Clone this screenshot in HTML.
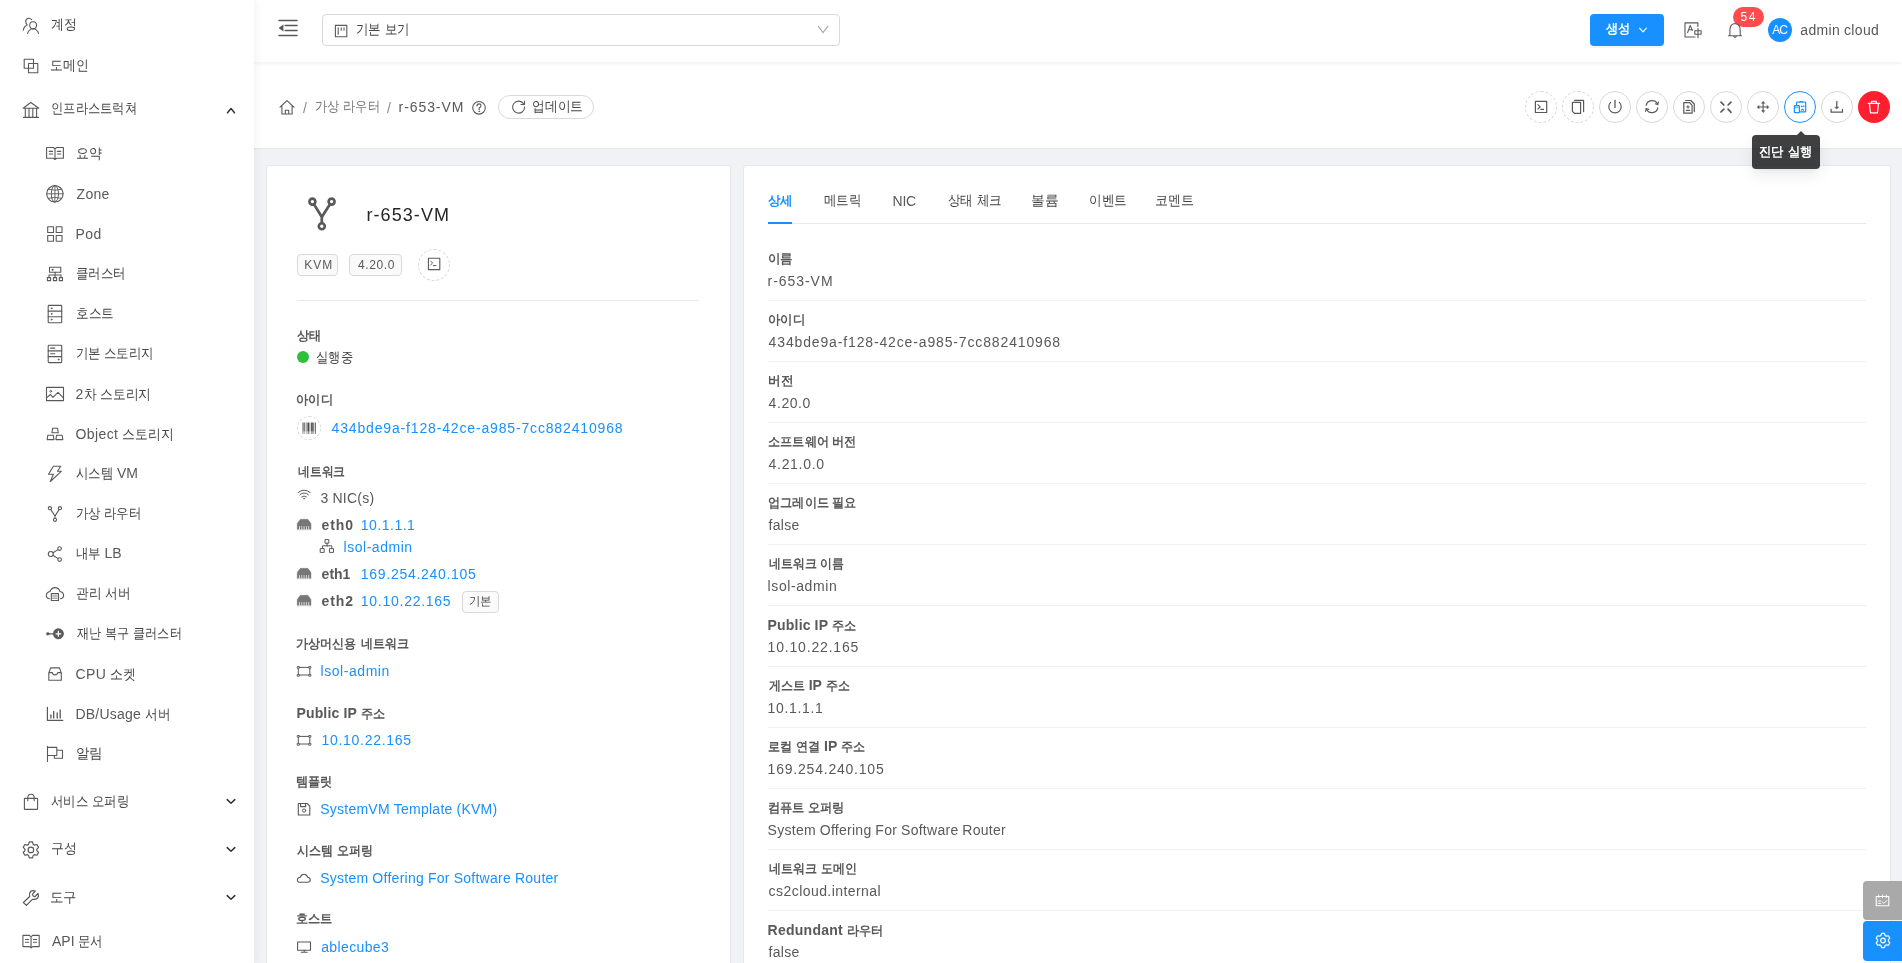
<!DOCTYPE html>
<html><head><meta charset="utf-8"><title>r-653-VM</title>
<style>
html,body{margin:0;padding:0;width:1902px;height:963px;overflow:hidden;background:#f0f2f5}
body{position:relative;font-family:"Liberation Sans",sans-serif}
.t{position:absolute;line-height:20px;white-space:nowrap}
svg{overflow:visible}
</style></head><body>
<div style="position:absolute;left:254px;top:62px;width:1648px;height:86px;background:#fff;border-bottom:1px solid #e8e8e8;"></div>
<div style="position:absolute;left:254px;top:0px;width:1648px;height:62px;background:#fff;box-shadow:0 1px 4px rgba(0,21,41,.08);"></div>
<div style="position:absolute;left:0px;top:0px;width:254px;height:963px;background:#fff;box-shadow:2px 0 8px 0 rgba(29,35,41,.06);"></div>
<div style="position:absolute;left:266px;top:165px;width:465px;height:820px;background:#fff;border:1px solid #e8e8e8;border-radius:3px;box-sizing:border-box;"></div>
<div style="position:absolute;left:743px;top:165px;width:1148px;height:820px;background:#fff;border:1px solid #e8e8e8;border-radius:3px;box-sizing:border-box;"></div>
<div style="position:absolute;left:322px;top:14px;width:518px;height:32px;border:1px solid #d9d9d9;border-radius:4px;box-sizing:border-box;background:#fff;"></div>
<div style="position:absolute;left:1590px;top:14px;width:74px;height:32px;background:#1890ff;border-radius:4px;box-shadow:0 2px 0 rgba(0,0,0,.045);"></div>
<div style="position:absolute;left:1733px;top:7px;width:31px;height:20px;background:#ff4d4f;border-radius:10px;box-shadow:0 0 0 1px #fff;"></div>
<div style="position:absolute;left:1768px;top:18px;width:24px;height:24px;background:#1890ff;border-radius:50%;"></div>
<div style="position:absolute;left:498px;top:95px;width:96px;height:24px;border:1px solid #d9d9d9;border-radius:12px;box-sizing:border-box;background:#fff;"></div>
<div style="position:absolute;left:1525px;top:91px;width:32px;height:32px;border:1px dashed #d9d9d9;background:#fff;border-radius:50%;box-sizing:border-box;"></div>
<div style="position:absolute;left:1562px;top:91px;width:32px;height:32px;border:1px dashed #d9d9d9;background:#fff;border-radius:50%;box-sizing:border-box;"></div>
<div style="position:absolute;left:1599px;top:91px;width:32px;height:32px;border:1px solid #d9d9d9;background:#fff;border-radius:50%;box-sizing:border-box;"></div>
<div style="position:absolute;left:1636px;top:91px;width:32px;height:32px;border:1px solid #d9d9d9;background:#fff;border-radius:50%;box-sizing:border-box;"></div>
<div style="position:absolute;left:1673px;top:91px;width:32px;height:32px;border:1px solid #d9d9d9;background:#fff;border-radius:50%;box-sizing:border-box;"></div>
<div style="position:absolute;left:1710px;top:91px;width:32px;height:32px;border:1px solid #d9d9d9;background:#fff;border-radius:50%;box-sizing:border-box;"></div>
<div style="position:absolute;left:1747px;top:91px;width:32px;height:32px;border:1px solid #d9d9d9;background:#fff;border-radius:50%;box-sizing:border-box;"></div>
<div style="position:absolute;left:1784px;top:91px;width:32px;height:32px;border:1px solid #1890ff;background:#fff;border-radius:50%;box-sizing:border-box;"></div>
<div style="position:absolute;left:1821px;top:91px;width:32px;height:32px;border:1px solid #d9d9d9;background:#fff;border-radius:50%;box-sizing:border-box;"></div>
<div style="position:absolute;left:1858px;top:91px;width:32px;height:32px;background:#ff1f30;border-radius:50%;box-sizing:border-box;"></div>
<div style="position:absolute;left:1752px;top:135px;width:68px;height:34px;background:rgba(0,0,0,.75);border-radius:4px;box-shadow:0 3px 6px -4px rgba(0,0,0,.12),0 6px 16px 0 rgba(0,0,0,.08);"></div>
<div style="position:absolute;left:1796.5px;top:131px;width:0;height:0;border-left:4px solid transparent;border-right:4px solid transparent;border-bottom:4px solid rgba(0,0,0,.75)"></div>
<div style="position:absolute;left:297px;top:254px;width:41px;height:22px;border:1px solid #d9d9d9;border-radius:4px;background:#fafafa;box-sizing:border-box;"></div>
<div style="position:absolute;left:349px;top:254px;width:53px;height:22px;border:1px solid #d9d9d9;border-radius:4px;background:#fafafa;box-sizing:border-box;"></div>
<div style="position:absolute;left:418px;top:249px;width:32px;height:32px;border:1px dashed #d9d9d9;border-radius:50%;box-sizing:border-box;"></div>
<div style="position:absolute;left:297px;top:300px;width:402px;height:1px;background:#e8e8e8;"></div>
<div style="position:absolute;left:297px;top:351px;width:12px;height:12px;background:#2fbf3b;border-radius:50%;"></div>
<div style="position:absolute;left:297px;top:416px;width:24px;height:24px;border:1px dashed #d9d9d9;border-radius:50%;box-sizing:border-box;"></div>
<div style="position:absolute;left:462px;top:591px;width:37px;height:22px;border:1px solid #d9d9d9;border-radius:4px;background:#fafafa;box-sizing:border-box;"></div>
<div style="position:absolute;left:768px;top:223px;width:1098px;height:1px;background:#e8e8e8;"></div>
<div style="position:absolute;left:768px;top:222px;width:24px;height:2px;background:#1890ff;"></div>
<div style="position:absolute;left:768px;top:300px;width:1098px;height:1px;background:#f0f0f0;"></div>
<div style="position:absolute;left:768px;top:361px;width:1098px;height:1px;background:#f0f0f0;"></div>
<div style="position:absolute;left:768px;top:422px;width:1098px;height:1px;background:#f0f0f0;"></div>
<div style="position:absolute;left:768px;top:483px;width:1098px;height:1px;background:#f0f0f0;"></div>
<div style="position:absolute;left:768px;top:544px;width:1098px;height:1px;background:#f0f0f0;"></div>
<div style="position:absolute;left:768px;top:605px;width:1098px;height:1px;background:#f0f0f0;"></div>
<div style="position:absolute;left:768px;top:666px;width:1098px;height:1px;background:#f0f0f0;"></div>
<div style="position:absolute;left:768px;top:727px;width:1098px;height:1px;background:#f0f0f0;"></div>
<div style="position:absolute;left:768px;top:788px;width:1098px;height:1px;background:#f0f0f0;"></div>
<div style="position:absolute;left:768px;top:849px;width:1098px;height:1px;background:#f0f0f0;"></div>
<div style="position:absolute;left:768px;top:910px;width:1098px;height:1px;background:#f0f0f0;"></div>
<div style="position:absolute;left:1863px;top:881px;width:39px;height:39px;background:#a9a9a9;border-radius:4px 0 0 4px;"></div>
<div style="position:absolute;left:1863px;top:921px;width:39px;height:40px;background:#1890ff;border-radius:4px 0 0 4px;"></div>
<div style="position:absolute;left:0;top:0;width:1902px;height:963px;will-change:transform">
<div class="t" style="left:51.00px;top:14px;font-size:14px;color:#595959;"><span style="display:inline-block;font-size:13.5px;transform:scaleX(0.9259);transform-origin:0 0;margin-right:-2.000px;color:#454545;">계정</span></div>
<div class="t" style="left:50.00px;top:55px;font-size:14px;color:#595959;"><span style="display:inline-block;font-size:13.5px;transform:scaleX(0.9136);transform-origin:0 0;margin-right:-3.500px;color:#454545;">도메인</span></div>
<div class="t" style="left:51.00px;top:98px;font-size:14px;color:#595959;"><span style="display:inline-block;font-size:13.5px;transform:scaleX(0.8783);transform-origin:0 0;margin-right:-11.500px;color:#454545;">인프라스트럭쳐</span></div>
<div class="t" style="left:75.50px;top:143px;font-size:14px;color:#595959;"><span style="display:inline-block;font-size:13.5px;transform:scaleX(0.9259);transform-origin:0 0;margin-right:-2.000px;color:#454545;">요약</span></div>
<div class="t" style="left:76.50px;top:184px;font-size:14px;color:#595959;"><span style="letter-spacing:0.333px">Zone</span></div>
<div class="t" style="left:75.50px;top:224px;font-size:14px;color:#595959;"><span style="letter-spacing:0.500px">Pod</span></div>
<div class="t" style="left:75.50px;top:263px;font-size:14px;color:#595959;"><span style="display:inline-block;font-size:13.5px;transform:scaleX(0.8889);transform-origin:0 0;margin-right:-6.000px;color:#454545;">클러스터</span></div>
<div class="t" style="left:75.50px;top:303px;font-size:14px;color:#595959;"><span style="display:inline-block;font-size:13.5px;transform:scaleX(0.9012);transform-origin:0 0;margin-right:-4.000px;color:#454545;">호스트</span></div>
<div class="t" style="left:75.50px;top:343px;font-size:14px;color:#595959;"><span style="display:inline-block;font-size:13.5px;transform:scaleX(0.8889);transform-origin:0 0;margin-right:-3.000px;color:#454545;">기본</span> <span style="display:inline-block;font-size:13.5px;transform:scaleX(0.8889);transform-origin:0 0;margin-right:-6.000px;color:#454545;">스토리지</span></div>
<div class="t" style="left:75.50px;top:384px;font-size:14px;color:#595959;"><span style="letter-spacing:0.333px">2</span><span style="display:inline-block;font-size:13.5px;transform:scaleX(0.9136);transform-origin:0 0;margin-right:-1.167px;color:#454545;">차</span> <span style="display:inline-block;font-size:13.5px;transform:scaleX(0.9136);transform-origin:0 0;margin-right:-4.667px;color:#454545;">스토리지</span></div>
<div class="t" style="left:75.50px;top:424px;font-size:14px;color:#595959;"><span style="letter-spacing:0.400px">Object</span> <span style="display:inline-block;font-size:13.5px;transform:scaleX(0.9185);transform-origin:0 0;margin-right:-4.400px;color:#454545;">스토리지</span></div>
<div class="t" style="left:75.50px;top:463px;font-size:14px;color:#595959;"><span style="display:inline-block;font-size:13.5px;transform:scaleX(0.8889);transform-origin:0 0;margin-right:-4.500px;color:#454545;">시스템</span> VM</div>
<div class="t" style="left:75.50px;top:503px;font-size:14px;color:#595959;"><span style="display:inline-block;font-size:13.5px;transform:scaleX(0.8889);transform-origin:0 0;margin-right:-3.000px;color:#454545;">가상</span> <span style="display:inline-block;font-size:13.5px;transform:scaleX(0.8889);transform-origin:0 0;margin-right:-4.500px;color:#454545;">라우터</span></div>
<div class="t" style="left:75.50px;top:543px;font-size:14px;color:#595959;"><span style="display:inline-block;font-size:13.5px;transform:scaleX(0.8889);transform-origin:0 0;margin-right:-3.000px;color:#454545;">내부</span> LB</div>
<div class="t" style="left:75.50px;top:583px;font-size:14px;color:#595959;"><span style="display:inline-block;font-size:13.5px;transform:scaleX(0.9074);transform-origin:0 0;margin-right:-2.500px;color:#454545;">관리</span> <span style="display:inline-block;font-size:13.5px;transform:scaleX(0.9074);transform-origin:0 0;margin-right:-2.500px;color:#454545;">서버</span></div>
<div class="t" style="left:76.50px;top:623px;font-size:14px;color:#595959;"><span style="display:inline-block;font-size:13.5px;transform:scaleX(0.8704);transform-origin:0 0;margin-right:-3.500px;color:#454545;">재난</span> <span style="display:inline-block;font-size:13.5px;transform:scaleX(0.8704);transform-origin:0 0;margin-right:-3.500px;color:#454545;">복구</span> <span style="display:inline-block;font-size:13.5px;transform:scaleX(0.8704);transform-origin:0 0;margin-right:-7.000px;color:#454545;">클러스터</span></div>
<div class="t" style="left:75.50px;top:664px;font-size:14px;color:#595959;"><span style="letter-spacing:0.400px">CPU</span> <span style="display:inline-block;font-size:13.5px;transform:scaleX(0.9185);transform-origin:0 0;margin-right:-2.200px;color:#454545;">소켓</span></div>
<div class="t" style="left:75.50px;top:704px;font-size:14px;color:#595959;"><span style="letter-spacing:0.200px">DB/Usage</span> <span style="display:inline-block;font-size:13.5px;transform:scaleX(0.9037);transform-origin:0 0;margin-right:-2.600px;color:#454545;">서버</span></div>
<div class="t" style="left:75.50px;top:743px;font-size:14px;color:#595959;"><span style="display:inline-block;font-size:13.5px;transform:scaleX(0.9630);transform-origin:0 0;margin-right:-1.000px;color:#454545;">알림</span></div>
<div class="t" style="left:51.00px;top:791px;font-size:14px;color:#595959;"><span style="display:inline-block;font-size:13.5px;transform:scaleX(0.8889);transform-origin:0 0;margin-right:-4.500px;color:#454545;">서비스</span> <span style="display:inline-block;font-size:13.5px;transform:scaleX(0.8889);transform-origin:0 0;margin-right:-4.500px;color:#454545;">오퍼링</span></div>
<div class="t" style="left:51.00px;top:838px;font-size:14px;color:#595959;"><span style="display:inline-block;font-size:13.5px;transform:scaleX(0.9259);transform-origin:0 0;margin-right:-2.000px;color:#454545;">구성</span></div>
<div class="t" style="left:50.00px;top:887px;font-size:14px;color:#595959;"><span style="display:inline-block;font-size:13.5px;transform:scaleX(0.9630);transform-origin:0 0;margin-right:-1.000px;color:#454545;">도구</span></div>
<div class="t" style="left:52.00px;top:931px;font-size:14px;color:#595959;">API <span style="display:inline-block;font-size:13.5px;transform:scaleX(0.8889);transform-origin:0 0;margin-right:-3.000px;color:#454545;">문서</span></div>
<div class="t" style="left:356.00px;top:19px;font-size:14px;color:#595959;"><span style="display:inline-block;font-size:13.5px;transform:scaleX(0.8889);transform-origin:0 0;margin-right:-3.000px;color:#454545;">기본</span> <span style="display:inline-block;font-size:13.5px;transform:scaleX(0.8889);transform-origin:0 0;margin-right:-3.000px;color:#454545;">보기</span></div>
<div class="t" style="left:1606.00px;top:18px;font-size:14px;color:#fff;font-weight:700;"><span style="display:inline-block;font-size:13.0px;transform:scaleX(0.9385);transform-origin:0 0;margin-right:-1.600px;">생성</span></div>
<div class="t" style="left:1740.50px;top:7px;font-size:12px;color:#fff;"><span style="letter-spacing:1.500px">54</span></div>
<div class="t" style="left:1772.30px;top:20.4px;font-size:12px;color:#fff;"><span style="letter-spacing:-1.000px">AC</span></div>
<div class="t" style="left:1800.30px;top:20.3px;font-size:14px;color:#595959;"><span style="letter-spacing:0.333px">admin</span> <span style="letter-spacing:0.333px">cloud</span></div>
<div class="t" style="left:303.00px;top:98px;font-size:14px;color:#8c8c8c;">/</div>
<div class="t" style="left:314.60px;top:96px;font-size:14px;color:#8c8c8c;"><span style="display:inline-block;font-size:13.5px;transform:scaleX(0.8800);transform-origin:0 0;margin-right:-3.240px;color:#777;">가상</span> <span style="display:inline-block;font-size:13.5px;transform:scaleX(0.8800);transform-origin:0 0;margin-right:-4.860px;color:#777;">라우터</span></div>
<div class="t" style="left:387.00px;top:98px;font-size:14px;color:#8c8c8c;">/</div>
<div class="t" style="left:398.60px;top:97px;font-size:14px;color:#595959;"><span style="letter-spacing:0.914px">r-653-VM</span></div>
<div class="t" style="left:531.80px;top:96px;font-size:14px;color:#595959;"><span style="display:inline-block;font-size:13.5px;transform:scaleX(0.9111);transform-origin:0 0;margin-right:-4.800px;color:#454545;">업데이트</span></div>
<div class="t" style="left:1759.30px;top:141px;font-size:14px;color:#fff;font-weight:700;"><span style="display:inline-block;font-size:13.0px;transform:scaleX(0.9462);transform-origin:0 0;margin-right:-1.400px;">진단</span> <span style="display:inline-block;font-size:13.0px;transform:scaleX(0.9462);transform-origin:0 0;margin-right:-1.400px;">실행</span></div>
<div class="t" style="left:366.40px;top:205px;font-size:18px;color:#262626;"><span style="letter-spacing:1.086px">r-653-VM</span></div>
<div class="t" style="left:304.30px;top:255px;font-size:12px;color:#595959;"><span style="letter-spacing:1.000px">KVM</span></div>
<div class="t" style="left:358.00px;top:255px;font-size:12px;color:#595959;"><span style="letter-spacing:0.600px">4.20.0</span></div>
<div class="t" style="left:297.00px;top:325px;font-size:14px;color:#595959;font-weight:700;"><span style="display:inline-block;font-size:13.0px;transform:scaleX(0.9346);transform-origin:0 0;margin-right:-1.700px;">상태</span></div>
<div class="t" style="left:316.40px;top:347px;font-size:14px;color:#595959;"><span style="display:inline-block;font-size:13.5px;transform:scaleX(0.8790);transform-origin:0 0;margin-right:-4.900px;color:#454545;">실행중</span></div>
<div class="t" style="left:296.00px;top:389px;font-size:14px;color:#595959;font-weight:700;"><span style="display:inline-block;font-size:13.0px;transform:scaleX(0.9487);transform-origin:0 0;margin-right:-2.000px;">아이디</span></div>
<div class="t" style="left:331.60px;top:418px;font-size:14px;color:#1890ff;"><span style="letter-spacing:0.840px">434bde9a-f128-42ce-a985-7cc882410968</span></div>
<div class="t" style="left:297.50px;top:461px;font-size:14px;color:#595959;font-weight:700;"><span style="display:inline-block;font-size:13.0px;transform:scaleX(0.9096);transform-origin:0 0;margin-right:-4.700px;">네트워크</span></div>
<div class="t" style="left:320.60px;top:488px;font-size:14px;color:#595959;"><span style="letter-spacing:0.233px">3</span> <span style="letter-spacing:0.233px">NIC(s)</span></div>
<div class="t" style="left:321.60px;top:515px;font-size:14px;color:#595959;font-weight:700;"><span style="letter-spacing:0.900px">eth0</span></div>
<div class="t" style="left:360.80px;top:515px;font-size:14px;color:#1890ff;"><span style="letter-spacing:0.500px">10.1.1.1</span></div>
<div class="t" style="left:343.50px;top:537px;font-size:14px;color:#1890ff;"><span style="letter-spacing:0.533px">lsol-admin</span></div>
<div class="t" style="left:321.60px;top:564px;font-size:14px;color:#595959;font-weight:700;">eth1</div>
<div class="t" style="left:360.80px;top:564px;font-size:14px;color:#1890ff;"><span style="letter-spacing:0.714px">169.254.240.105</span></div>
<div class="t" style="left:321.60px;top:591px;font-size:14px;color:#595959;font-weight:700;"><span style="letter-spacing:0.900px">eth2</span></div>
<div class="t" style="left:360.80px;top:591px;font-size:14px;color:#1890ff;"><span style="letter-spacing:0.736px">10.10.22.165</span></div>
<div class="t" style="left:468.50px;top:591px;font-size:12px;color:#595959;"><span style="display:inline-block;font-size:12px;transform:scaleX(0.9458);transform-origin:0 0;margin-right:-1.300px;color:#454545;">기본</span></div>
<div class="t" style="left:296.40px;top:633px;font-size:14px;color:#595959;font-weight:700;"><span style="display:inline-block;font-size:13.0px;transform:scaleX(0.9274);transform-origin:0 0;margin-right:-4.722px;">가상머신용</span> <span style="display:inline-block;font-size:13.0px;transform:scaleX(0.9274);transform-origin:0 0;margin-right:-3.778px;">네트워크</span></div>
<div class="t" style="left:320.50px;top:661px;font-size:14px;color:#1890ff;"><span style="letter-spacing:0.556px">lsol-admin</span></div>
<div class="t" style="left:296.40px;top:703px;font-size:14px;color:#595959;font-weight:700;"><span style="letter-spacing:0.180px">Public</span> <span style="letter-spacing:0.180px">IP</span> <span style="display:inline-block;font-size:13.0px;transform:scaleX(0.9369);transform-origin:0 0;margin-right:-1.640px;">주소</span></div>
<div class="t" style="left:321.50px;top:730px;font-size:14px;color:#1890ff;"><span style="letter-spacing:0.709px">10.10.22.165</span></div>
<div class="t" style="left:296.40px;top:771px;font-size:14px;color:#595959;font-weight:700;"><span style="display:inline-block;font-size:13.0px;transform:scaleX(0.9385);transform-origin:0 0;margin-right:-2.400px;">템플릿</span></div>
<div class="t" style="left:320.20px;top:799px;font-size:14px;color:#1890ff;"><span style="letter-spacing:0.250px">SystemVM</span> <span style="letter-spacing:0.250px">Template</span> <span style="letter-spacing:0.250px">(KVM)</span></div>
<div class="t" style="left:297.00px;top:840px;font-size:14px;color:#595959;font-weight:700;"><span style="display:inline-block;font-size:13.0px;transform:scaleX(0.9256);transform-origin:0 0;margin-right:-2.900px;">시스템</span> <span style="display:inline-block;font-size:13.0px;transform:scaleX(0.9256);transform-origin:0 0;margin-right:-2.900px;">오퍼링</span></div>
<div class="t" style="left:320.20px;top:868px;font-size:14px;color:#1890ff;"><span style="letter-spacing:0.267px">System</span> <span style="letter-spacing:0.267px">Offering</span> <span style="letter-spacing:0.267px">For</span> <span style="letter-spacing:0.267px">Software</span> <span style="letter-spacing:0.267px">Router</span></div>
<div class="t" style="left:296.00px;top:908px;font-size:14px;color:#595959;font-weight:700;"><span style="display:inline-block;font-size:13.0px;transform:scaleX(0.9385);transform-origin:0 0;margin-right:-2.400px;">호스트</span></div>
<div class="t" style="left:321.20px;top:937px;font-size:14px;color:#1890ff;"><span style="letter-spacing:0.375px">ablecube3</span></div>
<div class="t" style="left:768.10px;top:190px;font-size:14px;color:#1890ff;font-weight:700;"><span style="display:inline-block;font-size:13.0px;transform:scaleX(0.9615);transform-origin:0 0;margin-right:-1.000px;">상세</span></div>
<div class="t" style="left:824.20px;top:190px;font-size:14px;color:#595959;"><span style="display:inline-block;font-size:13.5px;transform:scaleX(0.8914);transform-origin:0 0;margin-right:-4.400px;color:#454545;">메트릭</span></div>
<div class="t" style="left:892.60px;top:191px;font-size:14px;color:#595959;"><span style="letter-spacing:-0.300px">NIC</span></div>
<div class="t" style="left:947.90px;top:190px;font-size:14px;color:#595959;"><span style="display:inline-block;font-size:13.5px;transform:scaleX(0.8926);transform-origin:0 0;margin-right:-2.900px;color:#454545;">상태</span> <span style="display:inline-block;font-size:13.5px;transform:scaleX(0.8926);transform-origin:0 0;margin-right:-2.900px;color:#454545;">체크</span></div>
<div class="t" style="left:1031.40px;top:190px;font-size:14px;color:#595959;"><span style="display:inline-block;font-size:13.5px;transform:scaleX(0.9815);transform-origin:0 0;margin-right:-0.500px;color:#454545;">볼륨</span></div>
<div class="t" style="left:1088.70px;top:190px;font-size:14px;color:#595959;"><span style="display:inline-block;font-size:13.5px;transform:scaleX(0.9012);transform-origin:0 0;margin-right:-4.000px;color:#454545;">이벤트</span></div>
<div class="t" style="left:1155.40px;top:190px;font-size:14px;color:#595959;"><span style="display:inline-block;font-size:13.5px;transform:scaleX(0.9259);transform-origin:0 0;margin-right:-3.000px;color:#454545;">코멘트</span></div>
<div class="t" style="left:767.60px;top:248px;font-size:14px;color:#595959;font-weight:700;"><span style="display:inline-block;font-size:13.0px;transform:scaleX(0.9615);transform-origin:0 0;margin-right:-1.000px;">이름</span></div>
<div class="t" style="left:767.60px;top:271px;font-size:14px;color:#595959;"><span style="letter-spacing:0.943px">r-653-VM</span></div>
<div class="t" style="left:767.60px;top:309px;font-size:14px;color:#595959;font-weight:700;"><span style="display:inline-block;font-size:13.0px;transform:scaleX(0.9564);transform-origin:0 0;margin-right:-1.700px;">아이디</span></div>
<div class="t" style="left:768.60px;top:332px;font-size:14px;color:#595959;"><span style="letter-spacing:0.857px">434bde9a-f128-42ce-a985-7cc882410968</span></div>
<div class="t" style="left:767.60px;top:370px;font-size:14px;color:#595959;font-weight:700;"><span style="display:inline-block;font-size:13.0px;transform:scaleX(0.9731);transform-origin:0 0;margin-right:-0.700px;">버전</span></div>
<div class="t" style="left:768.60px;top:393px;font-size:14px;color:#595959;"><span style="letter-spacing:0.560px">4.20.0</span></div>
<div class="t" style="left:767.60px;top:431px;font-size:14px;color:#595959;font-weight:700;"><span style="display:inline-block;font-size:13.0px;transform:scaleX(0.9374);transform-origin:0 0;margin-right:-4.071px;">소프트웨어</span> <span style="display:inline-block;font-size:13.0px;transform:scaleX(0.9374);transform-origin:0 0;margin-right:-1.629px;">버전</span></div>
<div class="t" style="left:768.60px;top:454px;font-size:14px;color:#595959;"><span style="letter-spacing:0.686px">4.21.0.0</span></div>
<div class="t" style="left:767.60px;top:492px;font-size:14px;color:#595959;font-weight:700;"><span style="display:inline-block;font-size:13.0px;transform:scaleX(0.9374);transform-origin:0 0;margin-right:-4.071px;">업그레이드</span> <span style="display:inline-block;font-size:13.0px;transform:scaleX(0.9374);transform-origin:0 0;margin-right:-1.629px;">필요</span></div>
<div class="t" style="left:768.60px;top:515px;font-size:14px;color:#595959;"><span style="letter-spacing:0.250px">false</span></div>
<div class="t" style="left:768.60px;top:553px;font-size:14px;color:#595959;font-weight:700;"><span style="display:inline-block;font-size:13.0px;transform:scaleX(0.9167);transform-origin:0 0;margin-right:-4.333px;">네트워크</span> <span style="display:inline-block;font-size:13.0px;transform:scaleX(0.9167);transform-origin:0 0;margin-right:-2.167px;">이름</span></div>
<div class="t" style="left:767.60px;top:576px;font-size:14px;color:#595959;"><span style="letter-spacing:0.589px">lsol-admin</span></div>
<div class="t" style="left:767.60px;top:615px;font-size:14px;color:#595959;font-weight:700;"><span style="letter-spacing:0.180px">Public</span> <span style="letter-spacing:0.180px">IP</span> <span style="display:inline-block;font-size:13.0px;transform:scaleX(0.9369);transform-origin:0 0;margin-right:-1.640px;">주소</span></div>
<div class="t" style="left:767.60px;top:637px;font-size:14px;color:#595959;"><span style="letter-spacing:0.818px">10.10.22.165</span></div>
<div class="t" style="left:768.60px;top:675px;font-size:14px;color:#595959;font-weight:700;"><span style="display:inline-block;font-size:13.0px;transform:scaleX(0.9264);transform-origin:0 0;margin-right:-2.871px;">게스트</span> <span style="letter-spacing:0.043px">IP</span> <span style="display:inline-block;font-size:13.0px;transform:scaleX(0.9264);transform-origin:0 0;margin-right:-1.914px;">주소</span></div>
<div class="t" style="left:767.60px;top:698px;font-size:14px;color:#595959;"><span style="letter-spacing:0.643px">10.1.1.1</span></div>
<div class="t" style="left:767.60px;top:736px;font-size:14px;color:#595959;font-weight:700;"><span style="display:inline-block;font-size:13.0px;transform:scaleX(0.9327);transform-origin:0 0;margin-right:-1.750px;">로컬</span> <span style="display:inline-block;font-size:13.0px;transform:scaleX(0.9327);transform-origin:0 0;margin-right:-1.750px;">연결</span> <span style="letter-spacing:0.125px">IP</span> <span style="display:inline-block;font-size:13.0px;transform:scaleX(0.9327);transform-origin:0 0;margin-right:-1.750px;">주소</span></div>
<div class="t" style="left:767.60px;top:759px;font-size:14px;color:#595959;"><span style="letter-spacing:0.786px">169.254.240.105</span></div>
<div class="t" style="left:767.60px;top:797px;font-size:14px;color:#595959;font-weight:700;"><span style="display:inline-block;font-size:13.0px;transform:scaleX(0.9423);transform-origin:0 0;margin-right:-2.250px;">컴퓨트</span> <span style="display:inline-block;font-size:13.0px;transform:scaleX(0.9423);transform-origin:0 0;margin-right:-2.250px;">오퍼링</span></div>
<div class="t" style="left:767.60px;top:820px;font-size:14px;color:#595959;"><span style="letter-spacing:0.267px">System</span> <span style="letter-spacing:0.267px">Offering</span> <span style="letter-spacing:0.267px">For</span> <span style="letter-spacing:0.267px">Software</span> <span style="letter-spacing:0.267px">Router</span></div>
<div class="t" style="left:768.60px;top:858px;font-size:14px;color:#595959;font-weight:700;"><span style="display:inline-block;font-size:13.0px;transform:scaleX(0.9264);transform-origin:0 0;margin-right:-3.829px;">네트워크</span> <span style="display:inline-block;font-size:13.0px;transform:scaleX(0.9264);transform-origin:0 0;margin-right:-2.871px;">도메인</span></div>
<div class="t" style="left:768.60px;top:881px;font-size:14px;color:#595959;"><span style="letter-spacing:0.438px">cs2cloud.internal</span></div>
<div class="t" style="left:767.60px;top:920px;font-size:14px;color:#595959;font-weight:700;"><span style="letter-spacing:0.250px">Redundant</span> <span style="display:inline-block;font-size:13.0px;transform:scaleX(0.9423);transform-origin:0 0;margin-right:-2.250px;">라우터</span></div>
<div class="t" style="left:768.60px;top:942px;font-size:14px;color:#595959;"><span style="letter-spacing:0.250px">false</span></div>
</div>
<svg style="position:absolute;left:0;top:0" width="1902" height="963" viewBox="0 0 1902 963" stroke-linecap="round" stroke-linejoin="round"><circle cx="33.1" cy="25.2" r="3.4" stroke="#595959" stroke-width="1.1" fill="none"/><path d="M27.6 33.4 Q28.8 28.9 33.1 28.7 Q37.3 28.9 38.5 33.4" stroke="#595959" stroke-width="1.1" fill="none" /><path d="M31.6 19.7 Q30.3 18 28.5 18.3 Q25.6 18.8 25.7 21.6 Q25.8 23.6 27.3 24.9 L25.2 26.2 Q23.8 27.2 23.2 30.3" stroke="#595959" stroke-width="1.1" fill="none" /><rect x="24.2" y="59.2" width="9.3" height="9.1" rx="0" stroke="#595959" stroke-width="1.1" fill="none"/><rect x="28.5" y="63.5" width="9.3" height="9.3" rx="0" stroke="#595959" stroke-width="1.1" fill="none"/><path d="M23.2 108.3 L30.8 102.5 L38.8 108.3 Z M25.3 108.3 V117 M29 108.3 V117 M32.8 108.3 V117 M36.6 108.3 V117 M23.5 117.4 H38.5" stroke="#595959" stroke-width="1.1" fill="none" /><rect x="24.4" y="798.4" width="13.2" height="11" rx="0.5" stroke="#595959" stroke-width="1.1" fill="none"/><path d="M27.8 800.8 V798 Q27.8 794.3 31 794.3 Q34.2 794.3 34.2 798 V800.8" stroke="#595959" stroke-width="1.1" fill="none" /><path d="M33.24 855.43 L32.51 857.84 L29.29 857.84 L28.56 855.43 L27.28 854.69 L24.83 855.26 L23.22 852.48 L24.95 850.64 L24.95 849.16 L23.22 847.32 L24.83 844.54 L27.28 845.11 L28.56 844.37 L29.29 841.96 L32.51 841.96 L33.24 844.37 L34.52 845.11 L36.97 844.54 L38.58 847.32 L36.85 849.16 L36.85 850.64 L38.58 852.48 L36.97 855.26 L34.52 854.69 Z" stroke="#595959" stroke-width="1.2" fill="none" /><circle cx="30.9" cy="849.9" r="2.8" stroke="#595959" stroke-width="1.2" fill="none"/><path d="M23.4 902.5 L29.6 896.5 Q28.9 893.2 30.6 891.5 Q32.6 889.9 35.3 891 L32.7 893.9 Q32.4 896.6 35 896.6 L37.9 893.5 Q39.2 896.3 37.5 898 Q35.6 899.8 32.4 899.3 L26.4 905.4 Z" stroke="#595959" stroke-width="1.2" fill="none" /><path d="M22.9 935.4 H29.45 L31.05 936.8 L32.65 935.4 H39.2 V946.6 H32.65 L31.05 947.9 L29.45 946.6 H22.9 Z M31.05 936.8 V947.0" stroke="#595959" stroke-width="1.1" fill="none" /><path d="M25.5 939.426 H28.650000000000002 M25.5 942.232 H28.650000000000002 M33.45 939.426 H36.6 M33.45 942.232 H36.6" stroke="#595959" stroke-width="1.1" fill="none" /><path d="M227.5 112.8 L231 108.6 L234.5 112.8" stroke="#333" stroke-width="1.5" fill="none" /><path d="M227.2 799.6 L231 803.2 L234.8 799.6" stroke="#333" stroke-width="1.5" fill="none" /><path d="M227.2 847.6 L231 851.2 L234.8 847.6" stroke="#333" stroke-width="1.5" fill="none" /><path d="M227.2 895.6 L231 899.2 L234.8 895.6" stroke="#333" stroke-width="1.5" fill="none" /><path d="M46.6 147.5 H53.4 L55.0 148.9 L56.6 147.5 H63.4 V158.2 H56.6 L55.0 159.5 L53.4 158.2 H46.6 Z M55.0 148.9 V158.6" stroke="#595959" stroke-width="1.1" fill="none" /><path d="M49.2 151.361 H52.6 M49.2 154.052 H52.6 M57.4 151.361 H60.8 M57.4 154.052 H60.8" stroke="#595959" stroke-width="1.1" fill="none" /><circle cx="54.9" cy="193.8" r="8.2" stroke="#595959" stroke-width="1.1" fill="none"/><ellipse cx="54.9" cy="193.8" rx="3.6" ry="8.2" stroke="#595959" stroke-width="1" fill="none"/><path d="M54.9 185.6 V202 M46.7 193.8 H63.1 M48.2 189.3 Q54.9 191.3 61.6 189.3 M48.2 198.3 Q54.9 196.3 61.6 198.3" stroke="#595959" stroke-width="0.9" fill="none" /><rect x="47.7" y="226.8" width="5.8" height="5.7" rx="0" stroke="#595959" stroke-width="1.1" fill="none"/><rect x="56.2" y="226.8" width="5.8" height="5.7" rx="0" stroke="#595959" stroke-width="1.1" fill="none"/><rect x="47.7" y="235.5" width="5.8" height="5.8" rx="0" stroke="#595959" stroke-width="1.1" fill="none"/><rect x="56.2" y="235.5" width="5.8" height="5.8" rx="0" stroke="#595959" stroke-width="1.1" fill="none"/><rect x="49.5" y="267.2" width="11.3" height="5.1" rx="0" stroke="#595959" stroke-width="1.1" fill="none"/><circle cx="52.6" cy="269.7" r="0.5" stroke="#595959" stroke-width="1.1" fill="#595959"/><path d="M55.1 272.3 V275 M49 277.5 V275 H61 V277.5 M55.1 275 V277.5" stroke="#595959" stroke-width="1.1" fill="none" /><rect x="47.4" y="277.6" width="3.2" height="3" rx="0" stroke="#595959" stroke-width="1.1" fill="none"/><rect x="53.4" y="277.6" width="3.2" height="3" rx="0" stroke="#595959" stroke-width="1.1" fill="none"/><rect x="59.3" y="277.6" width="3.2" height="3" rx="0" stroke="#595959" stroke-width="1.1" fill="none"/><rect x="48.2" y="305.4" width="13.5" height="17.3" rx="0.8" stroke="#595959" stroke-width="1.1" fill="none"/><path d="M48.2 311.1 H61.7 M48.2 316.8 H61.7" stroke="#595959" stroke-width="1.1" fill="none" /><circle cx="51.6" cy="308.3" r="0.6" stroke="#595959" stroke-width="0.5" fill="#595959"/><circle cx="51.6" cy="313.9" r="0.6" stroke="#595959" stroke-width="0.5" fill="#595959"/><circle cx="51.6" cy="319.6" r="0.6" stroke="#595959" stroke-width="0.5" fill="#595959"/><rect x="48.2" y="345.3" width="13.5" height="17.3" rx="0.8" stroke="#595959" stroke-width="1.1" fill="none"/><path d="M48.2 350.9 H61.7 M48.2 356.6 H61.7 M50.6 348.1 H54.8 M50.6 353.8 H54.8" stroke="#595959" stroke-width="1.1" fill="none" /><circle cx="58.6" cy="359.6" r="0.6" stroke="#595959" stroke-width="0.5" fill="#595959"/><rect x="46.5" y="387.4" width="17" height="13.2" rx="0" stroke="#595959" stroke-width="1.1" fill="none"/><path d="M46.8 397.6 L50.5 394.5 L53 397.3 L58 392.3 L63.2 397.6" stroke="#595959" stroke-width="1.1" fill="none" /><circle cx="50.8" cy="391.3" r="0.9" stroke="#595959" stroke-width="0.9" fill="none"/><path d="M52.6 428.3 H57.6 L58.2 432.7 H52 Z M47.8 435.2 H53.3 L53.9 439.6 H47.2 Z M56.5 435.2 H62.2 L62.8 439.6 H55.9 Z" stroke="#595959" stroke-width="1.1" fill="none" /><path d="M53.4 466.3 H60.7 L57.5 471.3 H61.3 L50.3 481.5 L53.4 474.3 H48.5 Z" stroke="#595959" stroke-width="1.1" fill="none" /><circle cx="49.9" cy="508.2" r="1.6" stroke="#595959" stroke-width="1.1" fill="none"/><circle cx="59.9" cy="508.2" r="1.6" stroke="#595959" stroke-width="1.1" fill="none"/><circle cx="55" cy="519.8" r="1.6" stroke="#595959" stroke-width="1.1" fill="none"/><path d="M50.8 509.6 L55 516 L59 509.6 M55 516 V518.2" stroke="#595959" stroke-width="1.1" fill="none" /><circle cx="50.8" cy="554" r="2.5" stroke="#595959" stroke-width="1.1" fill="none"/><circle cx="59.6" cy="548.6" r="1.8" stroke="#595959" stroke-width="1.1" fill="none"/><circle cx="59.6" cy="559.6" r="1.8" stroke="#595959" stroke-width="1.1" fill="none"/><path d="M53 552.7 L58.1 549.6 M53 555.3 L58.1 558.6" stroke="#595959" stroke-width="1.1" fill="none" /><path d="M49.5 598.8 Q46 598.2 46.3 595 Q46.8 592 50 591.5 Q51.5 587.6 55 587.6 Q58.8 587.6 60 591.5 Q63.2 592 63.6 595 Q63.8 598.2 60.5 598.8" stroke="#595959" stroke-width="1.1" fill="none" /><rect x="51.3" y="593.6" width="7.2" height="6.9" rx="0" stroke="#595959" stroke-width="1.1" fill="none"/><path d="M52.6 596 H57.2 M52.6 598.2 H57.2" stroke="#595959" stroke-width="0.8" fill="none" /><circle cx="47.8" cy="633.8" r="1.4" stroke="#595959" stroke-width="0.5" fill="#595959"/><path d="M48 633.8 H53.5" stroke="#595959" stroke-width="1.2" fill="none" /><circle cx="58.4" cy="633.8" r="5.2" stroke="#595959" stroke-width="0.5" fill="#595959"/><path d="M58.4 631.4 V636.2 M56 633.8 H60.8" stroke="#fff" stroke-width="1.3" fill="none" /><path d="M48.8 673 L50.6 667.9 H59.5 L61.3 673 V680.3 H48.8 Z M48.8 672.6 H52.3 Q52.8 674.9 55 674.9 Q57.2 674.9 57.7 672.6 H61.3" stroke="#595959" stroke-width="1.1" fill="none" /><path d="M47.4 707.3 V720.3 H62.8" stroke="#595959" stroke-width="1.2" fill="none" /><path d="M50.9 715 V718 M53.7 711.4 V718 M57.2 713 V718 M60.2 709.8 V718" stroke="#595959" stroke-width="1.3" fill="none" /><path d="M47.5 746.2 V761.5 M47.5 747.4 H56.8 V755.5 H47.5 M56.8 750.3 H62.5 V758.3 H54.3 V755.5" stroke="#595959" stroke-width="1.1" fill="none" /><path d="M279 20.6 H297 M285.2 25.6 H297 M285.2 30.5 H297 M279 35.5 H297" stroke="#595959" stroke-width="1.5" fill="none" /><path d="M283 25 L279 28 L283 31 Z" stroke="#595959" stroke-width="0.5" fill="#595959" /><rect x="335.4" y="25.4" width="11.4" height="11.4" rx="0" stroke="#595959" stroke-width="1.1" fill="none"/><path d="M338.2 27.8 V34.3 M341.2 27.8 V30.2 M344 27.8 V30.2" stroke="#595959" stroke-width="1.1" fill="none" /><path d="M818.4 26.3 L823.1 32.7 L827.8 26.3" stroke="#aaa" stroke-width="1.1" fill="none" /><path d="M1639.6 28.2 L1643 31.8 L1646.4 28.2" stroke="#fff" stroke-width="1.1" fill="none" /><path d="M1697.9 26.6 V22.9 H1685 V37 H1695" stroke="#595959" stroke-width="1.1" fill="none" /><path d="M1687.6 32.6 L1690.2 25.4 L1692.3 30.4 M1688.7 29.8 H1692.4" stroke="#595959" stroke-width="1.1" fill="none" /><path d="M1698 28.5 V37.7" stroke="#595959" stroke-width="1.1" fill="none" /><rect x="1694.8" y="30.8" width="6.3" height="3.5" rx="0" stroke="#595959" stroke-width="1.1" fill="none"/><path d="M1729.9 35.6 V30 Q1729.9 24 1735 23.5 Q1740.2 24 1740.2 30 V35.6 M1728.4 35.8 H1741.6 M1733.6 36.2 Q1735 38.5 1736.4 36.2" stroke="#595959" stroke-width="1.1" fill="none" /><path d="M280 107.2 L287 100.6 L294 107.2 M281.9 105.6 V114 H292.1 V105.6 M285.3 114 V110.2 H288.7 V114" stroke="#595959" stroke-width="1.1" fill="none" /><circle cx="479" cy="107.8" r="6.3" stroke="#595959" stroke-width="1.1" fill="none"/><path d="M477 106 Q477 103.9 479 103.9 Q481 103.9 481 105.8 Q481 107.2 479.2 108 V109.4" stroke="#595959" stroke-width="1.1" fill="none" /><circle cx="479.2" cy="111.3" r="0.5" stroke="#595959" stroke-width="0.6" fill="#595959"/><path d="M523.6 103.8 A6 6 0 1 0 524.6 107" stroke="#595959" stroke-width="1.1" fill="none" /><path d="M524.5 101 V104.5 H521" stroke="#595959" stroke-width="1.1" fill="none" /><path d="M1535.4 101.4 H1546.7 V112.5 H1535.4 Z" stroke="#595959" stroke-width="1.2" fill="none" /><path d="M1537.9 104.6 L1540.2 106.8 L1537.9 109 M1540.8 109.4 H1543.6" stroke="#595959" stroke-width="1.1" fill="none" /><path d="M1574.5 100.3 H1583.6 V111.6 M1572.4 102.4 H1580.6 V113.4 H1574.5 L1572.4 111.3 Z" stroke="#595959" stroke-width="1.2" fill="none" /><path d="M1610.6 102.3 A6.2 6.2 0 1 0 1619.4 102.3" stroke="#595959" stroke-width="1.2" fill="none" /><path d="M1615 100.4 V107.4" stroke="#595959" stroke-width="1.3" fill="none" /><path d="M1646.2 105.4 A6 6 0 0 1 1657.6 104.3 M1657.8 107.8 A6 6 0 0 1 1646.4 108.9" stroke="#595959" stroke-width="1.2" fill="none" /><path d="M1658.4 101.8 L1657.9 104.6 L1655.3 103.8" stroke="#595959" stroke-width="1.1" fill="none" /><path d="M1645.6 111.4 L1646.1 108.6 L1648.7 109.4" stroke="#595959" stroke-width="1.1" fill="none" /><path d="M1683.8 102.6 H1689.6 L1692.1 105.4 V113.2 H1683.8 Z" stroke="#595959" stroke-width="1.2" fill="none" /><path d="M1685.6 100.5 H1690.8 L1694.3 104 V111.6" stroke="#595959" stroke-width="1.2" fill="none" /><path d="M1686.3 110.4 H1689.7" stroke="#595959" stroke-width="1.1" fill="none" /><path d="M1688 105.4 L1689.5 106.9 L1688 108.4 L1686.5 106.9 Z" stroke="#777" stroke-width="0.6" fill="#777" /><path d="M1721 102.1 L1723.8 105 M1731 102.2 L1728.1 105 M1720.9 112 L1723.9 109.1 M1731 112.3 L1728.1 109.2" stroke="#595959" stroke-width="1.7" fill="none" /><path d="M1758.6 107 H1767.5 M1763.1 102.8 V111.1" stroke="#595959" stroke-width="1.1" fill="none" /><path d="M1757.2 107 L1759.1 105.5 V108.5 Z M1768.9 107 L1767 105.5 V108.5 Z M1763.1 101.4 L1761.6 103.3 H1764.6 Z M1763.1 112.5 L1761.6 110.6 H1764.6 Z" stroke="#595959" stroke-width="0.5" fill="#595959" /><rect x="1796.5" y="102" width="9.2" height="9.8" rx="0.6" stroke="#1890ff" stroke-width="1.2" fill="none"/><path d="M1799.6 102.3 Q1801.1 100.6 1802.7 102.3" stroke="#1890ff" stroke-width="1.1" fill="none" /><rect x="1794.4" y="105.7" width="5" height="6.9" rx="0.6" stroke="#1890ff" stroke-width="1.2" fill="#fff"/><rect x="1795" y="106.6" width="3.8" height="1.6" fill="#69b7ff"/><circle cx="1801.6" cy="106.4" r="0.55" stroke="#1890ff" stroke-width="0.6" fill="#1890ff"/><circle cx="1803.6" cy="106.2" r="0.55" stroke="#1890ff" stroke-width="0.6" fill="#1890ff"/><path d="M1801.3 110.3 Q1802.5 108.5 1803.7 110.3" stroke="#1890ff" stroke-width="1.1" fill="none" /><path d="M1836.8 101.6 V107.6" stroke="#595959" stroke-width="1.3" fill="none" /><path d="M1835 107.1 H1838.6 L1836.8 109.1 Z" stroke="#595959" stroke-width="0.4" fill="#595959" /><path d="M1831.1 109.4 V112.2 H1842.5 V109.4" stroke="#595959" stroke-width="1.2" fill="none" /><path d="M1868.2 103.3 H1879.6 M1871.5 103.3 V101.3 H1876.3 V103.3 M1869.4 103.3 L1870.4 112.8 H1877.5 L1878.4 103.3" stroke="#fff" stroke-width="1.2" fill="none" /><circle cx="312.4" cy="201.6" r="3.0" stroke="#595959" stroke-width="2.6" fill="none"/><circle cx="331.6" cy="201.6" r="3.0" stroke="#595959" stroke-width="2.6" fill="none"/><circle cx="321.8" cy="226.2" r="3.0" stroke="#595959" stroke-width="2.6" fill="none"/><path d="M314.2 204.6 L321.8 217 L329.8 204.6 M321.8 217 V222.8" stroke="#595959" stroke-width="2.7" fill="none" /><rect x="428.4" y="258.2" width="11.4" height="11.4" rx="0" stroke="#595959" stroke-width="1.1" fill="none"/><path d="M430.6 261 L432.6 263 L430.6 265 M433.3 265.6 H436" stroke="#595959" stroke-width="1" fill="none" /><rect x="302.6" y="422.5" width="0.9" height="11.5" rx="0" stroke="#595959" stroke-width="0" fill="#333"/><rect x="304.3" y="422.5" width="0.6" height="11.5" rx="0" stroke="#595959" stroke-width="0" fill="#333"/><rect x="305.8" y="422.5" width="0.6" height="11.5" rx="0" stroke="#595959" stroke-width="0" fill="#333"/><rect x="307.5" y="422.5" width="1.4" height="11.5" rx="0" stroke="#595959" stroke-width="0" fill="#333"/><rect x="309.6" y="422.5" width="0.6" height="11.5" rx="0" stroke="#595959" stroke-width="0" fill="#333"/><rect x="311.2" y="422.5" width="1.5" height="11.5" rx="0" stroke="#595959" stroke-width="0" fill="#333"/><rect x="313.3" y="422.5" width="0.6" height="11.5" rx="0" stroke="#595959" stroke-width="0" fill="#333"/><rect x="314.8" y="422.5" width="0.9" height="11.5" rx="0" stroke="#595959" stroke-width="0" fill="#333"/><rect x="302.3" y="431.3" width="13" height="2.7" fill="#fff" opacity="0.45"/><path d="M298 492.6 Q304.1 487.6 310.2 492.6 M299.8 494.8 Q304.1 491 308.4 494.8 M301.7 496.9 Q304.1 494.9 306.5 496.9" stroke="#595959" stroke-width="1" fill="none" /><circle cx="304.1" cy="498.6" r="0.7" stroke="#595959" stroke-width="0.3" fill="#595959"/><path d="M297.2 529.3 V523.5999999999999 L300.3 519.3 H307.9 L311 523.5999999999999 V529.3 Z" stroke="#777" stroke-width="0.4" fill="#777" /><path d="M299.5 526.5 V529.3 M301.8 526.5 V529.3 M304.1 526.5 V529.3 M306.4 526.5 V529.3 M308.7 526.5 V529.3" stroke="#fff" stroke-width="0.7" fill="none" /><path d="M297.2 578.3 V572.5999999999999 L300.3 568.3 H307.9 L311 572.5999999999999 V578.3 Z" stroke="#777" stroke-width="0.4" fill="#777" /><path d="M299.5 575.5 V578.3 M301.8 575.5 V578.3 M304.1 575.5 V578.3 M306.4 575.5 V578.3 M308.7 575.5 V578.3" stroke="#fff" stroke-width="0.7" fill="none" /><path d="M297.2 605.3 V599.5999999999999 L300.3 595.3 H307.9 L311 599.5999999999999 V605.3 Z" stroke="#777" stroke-width="0.4" fill="#777" /><path d="M299.5 602.5 V605.3 M301.8 602.5 V605.3 M304.1 602.5 V605.3 M306.4 602.5 V605.3 M308.7 602.5 V605.3" stroke="#fff" stroke-width="0.7" fill="none" /><rect x="325.4" y="539.6" width="3.4" height="3.6" rx="0" stroke="#595959" stroke-width="1" fill="none"/><path d="M327.1 543.2 V545.8 M322.4 548.6 V545.8 H331.8 V548.6 M327.1 545.8 V546" stroke="#595959" stroke-width="1" fill="none" /><rect x="320.6" y="548.6" width="3.6" height="3.8" rx="0" stroke="#595959" stroke-width="1" fill="none"/><rect x="329.9" y="548.6" width="3.6" height="3.8" rx="0" stroke="#595959" stroke-width="1" fill="none"/><path d="M299.3 667.4000000000001 H308.8 M299.3 675.0 H308.8 M298.3 668.4000000000001 V674.0 M309.8 668.4000000000001 V674.0" stroke="#595959" stroke-width="1" fill="none" /><rect x="297.6" y="666.5" width="1.7" height="1.7" rx="0" stroke="#595959" stroke-width="0.9" fill="none"/><rect x="297.6" y="674.5" width="1.7" height="1.7" rx="0" stroke="#595959" stroke-width="0.9" fill="none"/><rect x="309.2" y="666.5" width="1.7" height="1.7" rx="0" stroke="#595959" stroke-width="0.9" fill="none"/><rect x="309.2" y="674.5" width="1.7" height="1.7" rx="0" stroke="#595959" stroke-width="0.9" fill="none"/><path d="M299.3 736.4000000000001 H308.8 M299.3 744.0 H308.8 M298.3 737.4000000000001 V743.0 M309.8 737.4000000000001 V743.0" stroke="#595959" stroke-width="1" fill="none" /><rect x="297.6" y="735.5" width="1.7" height="1.7" rx="0" stroke="#595959" stroke-width="0.9" fill="none"/><rect x="297.6" y="743.5" width="1.7" height="1.7" rx="0" stroke="#595959" stroke-width="0.9" fill="none"/><rect x="309.2" y="735.5" width="1.7" height="1.7" rx="0" stroke="#595959" stroke-width="0.9" fill="none"/><rect x="309.2" y="743.5" width="1.7" height="1.7" rx="0" stroke="#595959" stroke-width="0.9" fill="none"/><path d="M298.3 803.5 H307.2 L309.8 806.1 V815 H298.3 Z M300.6 803.5 V806.6 H305.6 V803.5" stroke="#595959" stroke-width="1.1" fill="none" /><circle cx="304.1" cy="810.6" r="1.6" stroke="#595959" stroke-width="1" fill="none"/><path d="M300.1 882.3 Q297.2 882.3 297.4 879.6 Q297.7 877.4 300.3 877.2 Q301.3 874.3 304 874.3 Q306.7 874.3 307.6 877.2 Q310.3 877.5 310.3 879.8 Q310.3 882.3 307.6 882.3 Z" stroke="#595959" stroke-width="1.1" fill="none" /><rect x="297.6" y="942" width="12.9" height="8.2" rx="0" stroke="#595959" stroke-width="1.1" fill="none"/><path d="M301.2 952.2 H307.2 M304.2 950.2 V952.2" stroke="#595959" stroke-width="1.1" fill="none" /><rect x="1876.2" y="896.5" width="12.6" height="9.3" rx="0" stroke="#fff" stroke-width="1.1" fill="none"/><path d="M1878.7 895 V897.5 M1882.5 895 V897.5 M1886.3 895 V897.5 M1878.2 901 H1880.8 M1878.2 903.4 H1880.8 M1882.2 901.8 L1884 903.4 L1887 900.4" stroke="#fff" stroke-width="0.9" fill="none" /><path d="M1885.10 945.47 L1884.43 947.56 L1881.57 947.56 L1880.90 945.47 L1879.74 944.81 L1877.60 945.27 L1876.17 942.79 L1877.64 941.17 L1877.64 939.83 L1876.17 938.21 L1877.60 935.73 L1879.74 936.19 L1880.90 935.53 L1881.57 933.44 L1884.43 933.44 L1885.10 935.53 L1886.26 936.19 L1888.40 935.73 L1889.83 938.21 L1888.36 939.83 L1888.36 941.17 L1889.83 942.79 L1888.40 945.27 L1886.26 944.81 Z" stroke="#fff" stroke-width="1.2" fill="none" /><circle cx="1883" cy="940.5" r="2.3" stroke="#fff" stroke-width="1.2" fill="none"/></svg>
</body></html>
